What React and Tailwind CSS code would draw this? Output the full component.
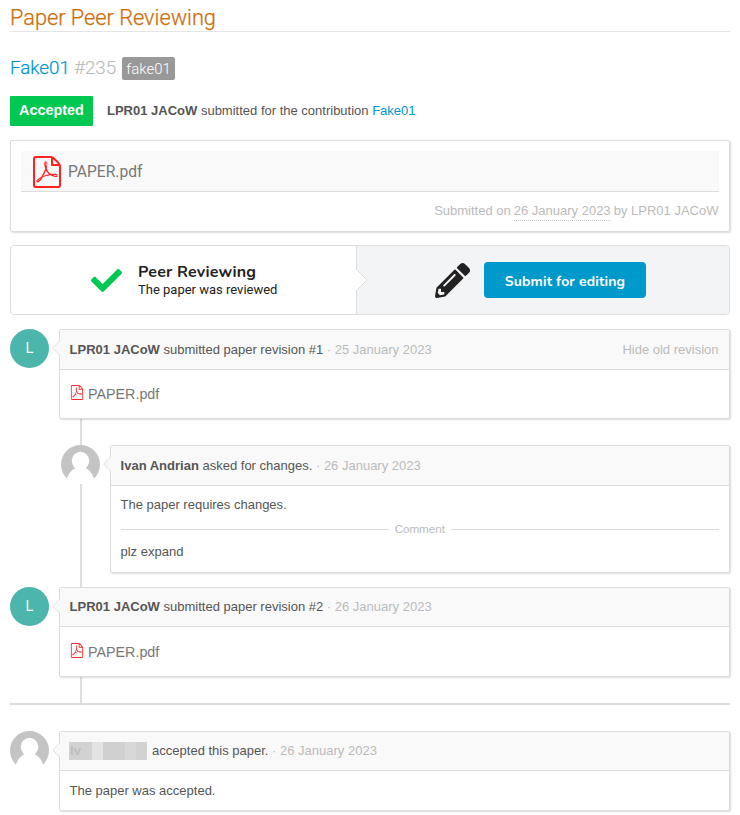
import React from "react";
import { ImFilePdf } from "react-icons/im";
import { FaCheck, FaPencilAlt } from "react-icons/fa";

function LetterAvatar() {
  return (
    <div className="flex h-[39px] w-[39px] shrink-0 items-center justify-center rounded-full bg-[#4db6ac] font-['Roboto',sans-serif] text-[14.5px] text-white">
      L
    </div>
  );
}

function UserAvatar() {
  return (
    <svg viewBox="0 0 39 39" className="block h-[39px] w-[39px] shrink-0">
      <rect width="39" height="39" fill="#fff" />
      <circle cx="19.5" cy="19.5" r="19.5" fill="#c4c4c4" />
      <ellipse cx="19.5" cy="15.8" rx="8.8" ry="9" fill="#fff" />
      <path d="M15 23 C10 25 7.500 29 6 33.500 L3 39 H36 L33 33.500 C31.500 29 29 25 24 23 Z" fill="#fff" />
    </svg>
  );
}

function Entry({ avatar, header, action, headerClass, className, children }) {
  return (
    <div className={"flex gap-[10px] " + className}>
      {avatar}
      <div className="relative min-w-0 flex-1 rounded-[2px] border border-[#dcdcdc] bg-white shadow-[1px_1px_2px_rgba(0,0,0,0.14)]">
        <svg viewBox="0 0 8 16" className="absolute top-[10px] -left-[8px] h-4 w-2">
          <path d="M8 0.500 L0.700 8 L8 15.500 Z" fill="#f9f9f9" />
          <path d="M8 0.500 L0.700 8 L8 15.500" fill="none" stroke="#dfdfdf" />
        </svg>
        <div className={"flex items-center justify-between border-b border-[#dcdcdc] bg-[#f9f9f9] pr-[10.5px] pl-[9.6px] " + headerClass}>
          <div>{header}</div>
          {action}
        </div>
        {children}
      </div>
    </div>
  );
}

function SmallFile({ className }) {
  return (
    <div className={"flex items-center pr-[10px] pl-[9.5px] text-[14.3px] text-[#777] " + className}>
      <ImFilePdf className="mt-[-3px] mr-[4.5px] h-[15px] w-[14px] text-[#ff2a2a]" preserveAspectRatio="none" />
      PAPER.pdf
    </div>
  );
}

export default function App() {
  return (
    <div className="h-[815px] w-[740px] overflow-hidden bg-white px-[10px] font-['Liberation_Sans',Arial,sans-serif] text-[13px] leading-[20px] text-[#555]">
      <h1 className="h-8 border-b border-[#e5e5e5] pt-[4px] font-['Roboto',sans-serif] text-[21.8px] leading-[28px] font-light tracking-[-0.03px] text-[#cb6f0c] [-webkit-text-stroke:0.25px]">
        Paper Peer Reviewing
      </h1>

      <div className="mt-[25px] flex h-[23px] items-center font-['Roboto',sans-serif] text-[18.8px] font-light">
        <span className="-mt-[2px] w-[59px] text-[#0099cc] [-webkit-text-stroke:0.25px]">Fake01</span>
        <span className="-mt-[2px] ml-[5px] w-[43px] text-[#bbb] [-webkit-text-stroke:0.15px]">#235</span>
        <span className="ml-[5px] flex h-[23px] w-[53px] items-center justify-center rounded-[2px] bg-[#999] text-[15px] text-white">fake01</span>
      </div>

      <div className="mt-4 flex h-[30px] items-center">
        <span className="flex h-[30px] w-[83px] items-center justify-center rounded-[1px] bg-[#00c851] pb-[2px] text-[14.4px] font-bold text-white">
          Accepted
        </span>
        <span className="ml-[14px]">
          <b>LPR01 JACoW</b> submitted for the contribution <span className="text-[#0099cc]">Fake01</span>
        </span>
      </div>

      <section className="mt-[14px] h-[92px] rounded-[2px] border border-[#dcdcdc] p-[10px] shadow-[1px_1px_2px_rgba(0,0,0,0.14)]">
        <div className="flex h-[41px] items-center border-b border-[#dcdcdc] bg-[#f9f9f9] pt-px pl-[10px]">
          <ImFilePdf className="h-[32px] w-[32px] text-[#f22]" />
          <span className="ml-[5px] font-['Roboto',sans-serif] text-[15.6px] text-[#777]">PAPER.pdf</span>
        </div>
        <div className="mt-[9px] flex justify-end pr-[0.5px] text-[#bbb]">
          <span>Submitted on</span>
          <span className="ml-[3px] h-5 w-[97px] border-b border-dotted border-[#ccc]">26 January 2023</span>
          <span className="ml-[3px]">by LPR01 JACoW</span>
        </div>
      </section>

      <section className="mt-[13px] flex h-[70px] rounded-[4px] border border-[#dcdddf]">
        <div className="relative flex w-[346px] items-center border-r border-[#dcdddf] pl-[80px] font-['Roboto',sans-serif] text-[#222]">
          <FaCheck className="mt-px h-[31px] w-[31px] text-[#00c851]" />
          <div className="ml-[16px]">
            <div className="font-['Nunito','Lato',sans-serif] text-[16px] leading-[19px] font-bold tracking-[0.22px]">Peer Reviewing</div>
            <div className="text-[13px] leading-[16px]">The paper was reviewed</div>
          </div>
          <svg viewBox="0 0 12 24" className="absolute top-[22px] -right-[12px] z-10 h-6 w-3">
            <path d="M0 1 L11 12 L0 23" fill="#fff" stroke="#dcdddf" />
          </svg>
        </div>
        <div className="flex flex-1 items-center rounded-r-[3px] bg-[#f3f4f6] pl-[78px]">
          <FaPencilAlt className="h-[35px] w-[35px] text-[#222]" />
          <button className="ml-[14px] h-[36px] w-[162px] rounded-[4px] bg-[#0099cc] pt-[4px] font-['Nunito','Lato',sans-serif] text-[14px] font-bold tracking-[0.14px] text-white">
            Submit for editing
          </button>
        </div>
      </section>

      <div className="mt-[14px] border-b-2 border-[#dcdcdc]">
        <Entry
          className="h-[90px]"
          headerClass="h-[40px]"
          avatar={<LetterAvatar />}
          header={<><b>LPR01 JACoW</b> submitted paper revision #1 <span className="text-[#bbb]">· 25 January 2023</span></>}
          action={<span className="text-[#bbb]">Hide old revision</span>}
        >
          <SmallFile className="h-[48px]" />
        </Entry>
        <div className="ml-[70px] h-[26px] w-[2px] bg-[#dedede]" />
        <div className="flex">
          <div className="-mr-[21px] ml-[70px] w-[2px] bg-[#dedede]" />
          <Entry
            className="relative h-[128px] flex-1"
            headerClass="h-[40px]"
            avatar={<UserAvatar />}
            header={<><b>Ivan Andrian</b> asked for changes. <span className="text-[#bbb]">· 26 January 2023</span></>}
          >
            <div className="pt-[9px] pr-[10px] pl-[9.5px]">
              <div>The paper requires changes.</div>
              <div className="mt-[7px] flex h-[15px] items-center gap-[6px] text-[11.6px] text-[#bbb]">
                <div className="h-px flex-1 bg-[#dcdcdc]" />
                <span className="-mt-[2px]">Comment</span>
                <div className="h-px flex-1 bg-[#dcdcdc]" />
              </div>
              <div className="mt-[5px]">plz expand</div>
            </div>
          </Entry>
        </div>
        <div className="ml-[70px] h-[14px] w-[2px] bg-[#dedede]" />
        <Entry
          className="h-[90px]"
          headerClass="h-[39px]"
          avatar={<LetterAvatar />}
          header={<><b>LPR01 JACoW</b> submitted paper revision #2 <span className="text-[#bbb]">· 26 January 2023</span></>}
        >
          <SmallFile className="h-[49px]" />
        </Entry>
        <div className="ml-[70px] h-[26px] w-[2px] bg-[#dedede]" />
      </div>

      <Entry
        className="mt-[26px] h-[80px]"
        headerClass="h-[39px]"
        avatar={<UserAvatar />}
        header={
          <div className="flex items-center">
            <span className="mr-[5px] -ml-[0.5px] flex h-[18px] w-[78px] overflow-hidden bg-[#d5d5d5] leading-[18px] font-bold text-[#bdbdbd]">
              <span className="w-[23px] bg-[#d2d2d2] pl-px">Iv</span>
              <span className="w-[11px] bg-[#e3e3e3]" />
              <span className="w-[22px] bg-[#d0d0d0]" />
              <span className="w-[11px] bg-[#d8d8d8]" />
              <span className="w-[11px] bg-[#d2d2d2]" />
            </span>
            <span>accepted this paper. <span className="text-[#bbb]">· 26 January 2023</span></span>
          </div>
        }
      >
        <div className="px-[9.5px] pt-[10px]">The paper was accepted.</div>
      </Entry>
    </div>
  );
}
